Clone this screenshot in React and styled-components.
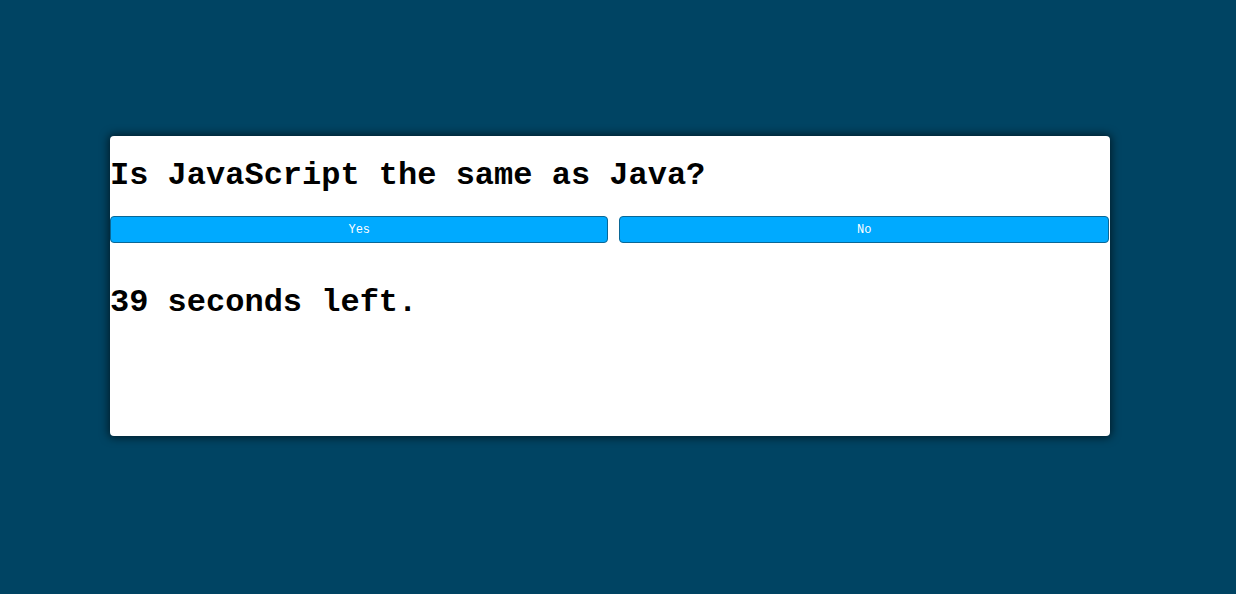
import React, { useState } from 'react'
import styled, { createGlobalStyle } from 'styled-components'

const GlobalStyle = createGlobalStyle`
  body {
    margin: 0;
    background-color: #004463;
    font-family: "Courier New", "Liberation Mono", monospace;
  }
`;

const Page = styled.div`
  display: flex;
  padding: 136px 0 0 110px;
  min-height: 594px;
  box-sizing: border-box;
`;

const Card = styled.div`
  width: 1000px;
  height: 300px;
  background-color: #ffffff;
  border-radius: 4px;
  box-shadow: 0 0 8px 2px rgba(0, 0, 0, 0.55);
  display: flex;
  flex-direction: column;
`;

const Question = styled.h1`
  font-size: 32px;
  font-weight: bold;
  line-height: 36px;
  color: #000;
  margin: 22px 0 22px 0;
`;

const Answers = styled.div`
  display: grid;
  grid-template-columns: 499fr 490fr;
  gap: 11px;
  padding-right: 1px;
`;

const Answer = styled.button`
  height: 27px;
  background-color: #00aaff;
  border: 1px solid #0a6796;
  border-radius: 4px;
  color: #ffffff;
  font-family: "Courier New", "Liberation Mono", monospace;
  font-size: 12px;
  cursor: pointer;
  &:hover {
    background-color: #0099e6;
  }
`;

const Timer = styled.h1`
  font-size: 32px;
  font-weight: bold;
  line-height: 36px;
  color: #000;
  margin: 42px 0 0 0;
`;

const App = () => {
  const [seconds] = useState(39)

  return (
    <>
      <GlobalStyle />
      <Page>
        <Card>
          <Question>Is JavaScript the same as Java?</Question>
          <Answers>
            <Answer>Yes</Answer>
            <Answer>No</Answer>
          </Answers>
          <Timer>{seconds} seconds left.</Timer>
        </Card>
      </Page>
    </>
  )
}

export default App
